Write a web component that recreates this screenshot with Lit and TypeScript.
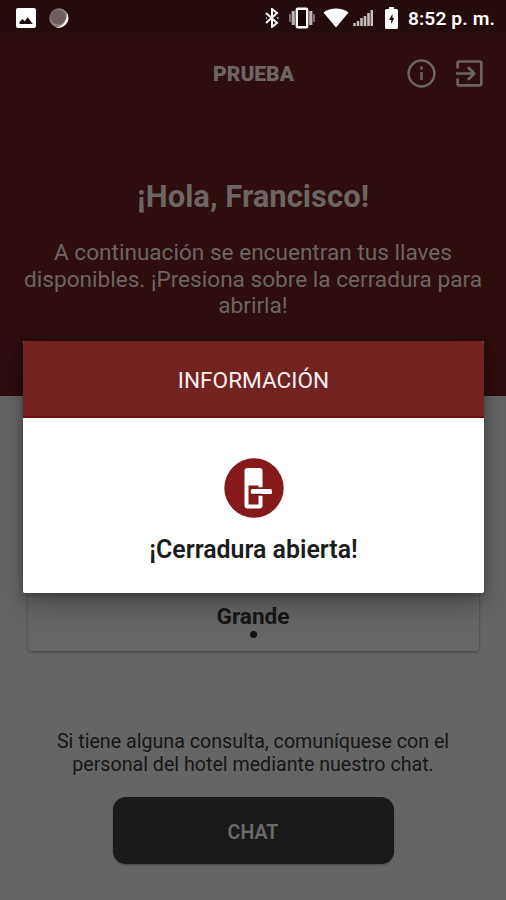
import { LitElement, html, css } from "lit";
import { customElement } from "lit/decorators.js";

@customElement("status-bar")
class StatusBar extends LitElement {
  static styles = css`
    :host {
      display: flex;
      align-items: center;
      justify-content: space-between;
      box-sizing: border-box;
      height: 33px;
      padding: 2px 11px 0 16px;
      background: #240b0c;
      color: #fff;
    }
    svg { display: block; }
    .group { display: flex; align-items: center; }
    .left { gap: 13px; }
    .bluetooth { margin-right: 10px; }
    .vibrate { margin-right: 8px; }
    .wifi { margin-right: 4px; }
    .signal { margin-right: 12px; }
    .battery { margin-right: 10px; }
    .time {
      font: 600 19.2px/22px Roboto, sans-serif;
      letter-spacing: 0.1px;
      white-space: nowrap;
      padding-top: 2px;
    }
  `;

  render() {
    return html`
      <div class="group left">
        <svg width="20" height="20" viewBox="0 0 20 20">
          <rect width="20" height="20" rx="2" fill="#fff" />
          <path d="M3.500 16v-2l3-3 2.300 2.300 2.900-4 4.800 6.200v.5z" fill="#1b0a0a" />
        </svg>
        <svg width="20" height="20" viewBox="0 0 20 20">
          <circle cx="10" cy="10" r="9.700" fill="#8d8080" />
          <path d="M18 5a10 10 0 0 1-11 14.500C14 18.500 18 13 18 5z" fill="#fff" />
          <circle cx="9" cy="9" r="7.600" fill="#6d5e5e" />
        </svg>
      </div>
      <div class="group">
        <svg class="bluetooth" width="14" height="20" viewBox="0 0 14 20">
          <path d="M1 5l11 10-5 4V1l5 4L1 15" fill="none" stroke="#fff" stroke-width="2" />
          <path d="M1 10h1M12 10h1.500" stroke="#aaa" stroke-width="2" />
        </svg>
        <svg class="vibrate" width="26" height="22" viewBox="0 0 26 22">
          <path d="M1 7v8M25 7v8" stroke="#8f8585" stroke-width="1.600" />
          <path d="M4.200 4v14M21.800 4v14" stroke="#bdb5b5" stroke-width="3.200" />
          <rect x="7.800" y="1.800" width="10.400" height="18.400" rx="1" fill="#150505" stroke="#fff" stroke-width="2.400" />
        </svg>
        <svg class="wifi" width="26" height="20" viewBox="0 0 26 20">
          <path d="M0.500 4.500C7-.7 19-.7 25.500 4.500L13 19.500z" fill="#fff" />
        </svg>
        <svg class="signal" width="20" height="16" viewBox="0 0 20 16">
          <path d="M1.500 16v-3M5 16v-5M8.500 16V8M12 16V6M15.500 16V3M18.800 16V0" stroke="#c9c0c0" stroke-width="2.500" />
        </svg>
        <svg class="battery" width="13" height="22" viewBox="0 0 13 22">
          <path d="M4 0h5v2h2.500Q13 2 13 3.500v17q0 1.500-1.500 1.500h-10Q0 22 0 20.500v-17Q0 2 1.500 2H4z" fill="#fff" />
          <path d="M7.500 7L4 13h2.200v4L9.300 11H7.500z" fill="#1b0a0a" />
        </svg>
        <span class="time">8:52 p. m.</span>
      </div>
    `;
  }
}

@customElement("info-dialog")
class InfoDialog extends LitElement {
  static styles = css`
    :host {
      display: block;
      height: 252px;
      border-radius: 2px;
      overflow: hidden;
      background: #fff;
      box-shadow: 0 14px 28px rgba(0, 0, 0, 0.24), 0 3px 9px rgba(0, 0, 0, 0.28);
      font-family: Roboto, sans-serif;
      text-align: center;
    }
    .title {
      box-sizing: border-box;
      height: 77px;
      padding-top: 2px;
      background: #72221f;
      border-bottom: 2px solid #701010;
      color: #fbf1f0;
      font-size: 22.6px;
      line-height: 75px;
    }
    .body {
      display: flex;
      flex-direction: column;
      align-items: center;
      padding-top: 40px;
    }
    .message {
      margin-top: 18px;
      font-size: 24.9px;
      line-height: 28px;
      font-weight: 600;
      color: #1c1c1c;
    }
    svg { display: block; }
  `;

  render() {
    return html`
      <div class="title">INFORMACIÓN</div>
      <div class="body">
        <svg width="60" height="60" viewBox="0 0 60 60">
          <circle cx="30" cy="30" r="29.700" fill="#861a1a" />
          <rect x="20.500" y="10" width="18" height="40.500" rx="3" fill="#fff" />
          <path d="M24.500 27.500h10v19h-10z" fill="#861a1a" />
          <rect x="25.500" y="29.300" width="24" height="8.500" rx="2" fill="#861a1a" />
          <rect x="26.800" y="31" width="21.200" height="5" rx="1.500" fill="#fff" />
          <path d="M28 36.300h10" stroke="#4e1414" />
        </svg>
        <div class="message">¡Cerradura abierta!</div>
      </div>
    `;
  }
}

@customElement("app-root")
class AppRoot extends LitElement {
  static styles = css`
    :host {
      display: flex;
      flex-direction: column;
      position: relative;
      height: 900px;
      overflow: hidden;
      background: #656565;
      font-family: Roboto, sans-serif;
      text-align: center;
      color: #161616;
    }
    svg { display: block; }
    h1, p { margin: 0; }
    .hero { height: 363px; background: #2d0d0d; color: #6b6663; }
    .toolbar {
      display: grid;
      grid-template-columns: 1fr auto 1fr;
      align-items: center;
      height: 82px;
      padding: 0 23.5px 0 24.5px;
    }
    .brand { grid-column: 2; font-size: 21px; font-weight: 900; }
    .actions {
      display: flex;
      justify-content: flex-end;
      align-items: center;
      gap: 20px;
      padding-bottom: 2px;
    }
    h1 { margin-top: 64px; font-size: 31px; line-height: 36px; font-weight: 700; }
    .intro { margin-top: 25px; font-size: 22.6px; line-height: 26.6px; }
    .page { display: flex; flex-direction: column; align-items: center; }
    .lock-card {
      box-sizing: border-box;
      width: 451px;
      height: 230px;
      margin-top: 25px;
      padding-bottom: 13px;
      display: flex;
      flex-direction: column;
      align-items: center;
      justify-content: flex-end;
      border-radius: 3px;
      background: #666;
      box-shadow: 0 1px 3px rgba(0, 0, 0, 0.35);
    }
    .room { font-size: 22.6px; line-height: 26px; font-weight: 700; }
    .dot { width: 7px; height: 7px; margin-top: 1px; border-radius: 50%; background: #141414; }
    .help { margin-top: 79px; font-size: 19.65px; line-height: 23px; }
    .chat {
      width: 281px;
      height: 67px;
      margin: 21px 0 0;
      padding: 3px 0 0;
      border: 0;
      border-radius: 13px;
      background: #1a1a1a;
      box-shadow: 0 1px 2px rgba(0, 0, 0, 0.3);
      color: #6a6a6a;
      font: 600 19.6px Roboto, sans-serif;
    }
    .dialog { position: absolute; left: 23px; right: 22px; top: 341px; }
  `;

  render() {
    return html`
      <status-bar></status-bar>
      <div class="hero">
        <div class="toolbar">
          <span class="brand">PRUEBA</span>
          <div class="actions">
            <svg width="29" height="29" viewBox="0 0 29 29" fill="none" stroke="currentColor" stroke-width="2.500">
              <circle cx="14.500" cy="14.500" r="12.900" />
              <path d="M14.500 13v8M14.500 7.500v3" />
            </svg>
            <svg width="27" height="27" viewBox="0 0 27 27" fill="none" stroke="currentColor" stroke-width="2.700">
              <path d="M1.600 8.500V3q0-1.500 1.500-1.500h20.700q1.500 0 1.500 1.500v20.800q0 1.500-1.500 1.500H3.100q-1.500 0-1.500-1.500v-5.300" />
              <path d="M0 13.500h17.500M12 7.300l6.200 6.200-6.200 6.200" />
            </svg>
          </div>
        </div>
        <h1>¡Hola, Francisco!</h1>
        <p class="intro">
          A continuación se encuentran tus llaves<br />
          disponibles. ¡Presiona sobre la cerradura para<br />
          abrirla!
        </p>
      </div>
      <div class="page">
        <div class="lock-card">
          <div class="room">Grande</div>
          <div class="dot"></div>
        </div>
        <p class="help">
          Si tiene alguna consulta, comuníquese con el<br />
          personal del hotel mediante nuestro chat.
        </p>
        <button class="chat">CHAT</button>
      </div>
      <info-dialog class="dialog"></info-dialog>
    `;
  }
}
